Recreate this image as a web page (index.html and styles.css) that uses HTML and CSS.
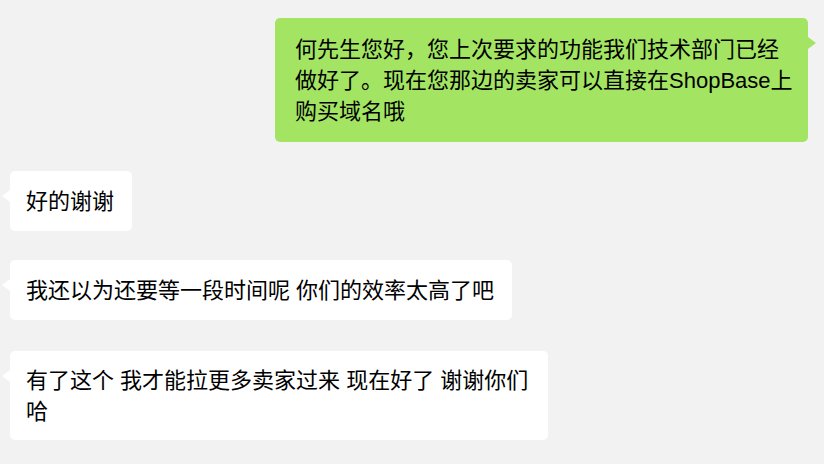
FILE: index.html
```html
<!DOCTYPE html>
<html lang="zh-CN">
<head>
    <meta charset="UTF-8">
    <meta name="viewport" content="width=device-width, initial-scale=1.0">
    <title>聊天记录</title>
    <link rel="stylesheet" href="styles.css">
</head>
<body>
    <div class="chat">
        <div class="fila fila-mia">
            <div class="burbuja burbuja-mia">何先生您好，您上次要求的功能我们技术部门已经做好了。现在您那边的卖家可以直接在ShopBase上购买域名哦</div>
        </div>
        <div class="fila">
            <div class="burbuja">好的谢谢</div>
        </div>
        <div class="fila">
            <div class="burbuja">我还以为还要等一段时间呢 你们的效率太高了吧</div>
        </div>
        <div class="fila fila-ultima">
            <div class="burbuja">有了这个 我才能拉更多卖家过来 现在好了 谢谢你们哈</div>
        </div>
    </div>
</body>
</html>
```

FILE: styles.css
```css
body {
    margin: 0;
    background-color: #f2f2f2;
    font-family: "Liberation Sans", "Noto Sans CJK SC", sans-serif;
    font-size: 22px;
    line-height: 31px;
    color: #000;
}

.chat {
    display: flex;
    flex-direction: column;
    gap: 29px;
    padding: 18px 16px 0 10px;
}

.fila {
    display: flex;
    justify-content: flex-start;
}

.fila-mia {
    justify-content: flex-end;
}

.fila-ultima {
    margin-top: 2px;
}

.burbuja {
    position: relative;
    box-sizing: border-box;
    max-width: 538px;
    padding: 14.5px 18px 14.5px 16px;
    background-color: #ffffff;
    border-radius: 5px;
}

/* colita de la burbuja */
.burbuja::before {
    content: "";
    position: absolute;
    top: 19px;
    right: 100%;
    border-top: 6px solid transparent;
    border-bottom: 6px solid transparent;
    border-right: 8px solid #ffffff;
}

.fila-ultima .burbuja {
    padding-top: 13.5px;
    padding-bottom: 13.5px;
}

.burbuja-mia {
    max-width: 533px;
    padding: 15.5px 13px 15.5px 20px;
    background-color: #a3e563;
}

.burbuja-mia::before {
    right: auto;
    left: 100%;
    border-right: none;
    border-left: 8px solid #a3e563;
}
```
